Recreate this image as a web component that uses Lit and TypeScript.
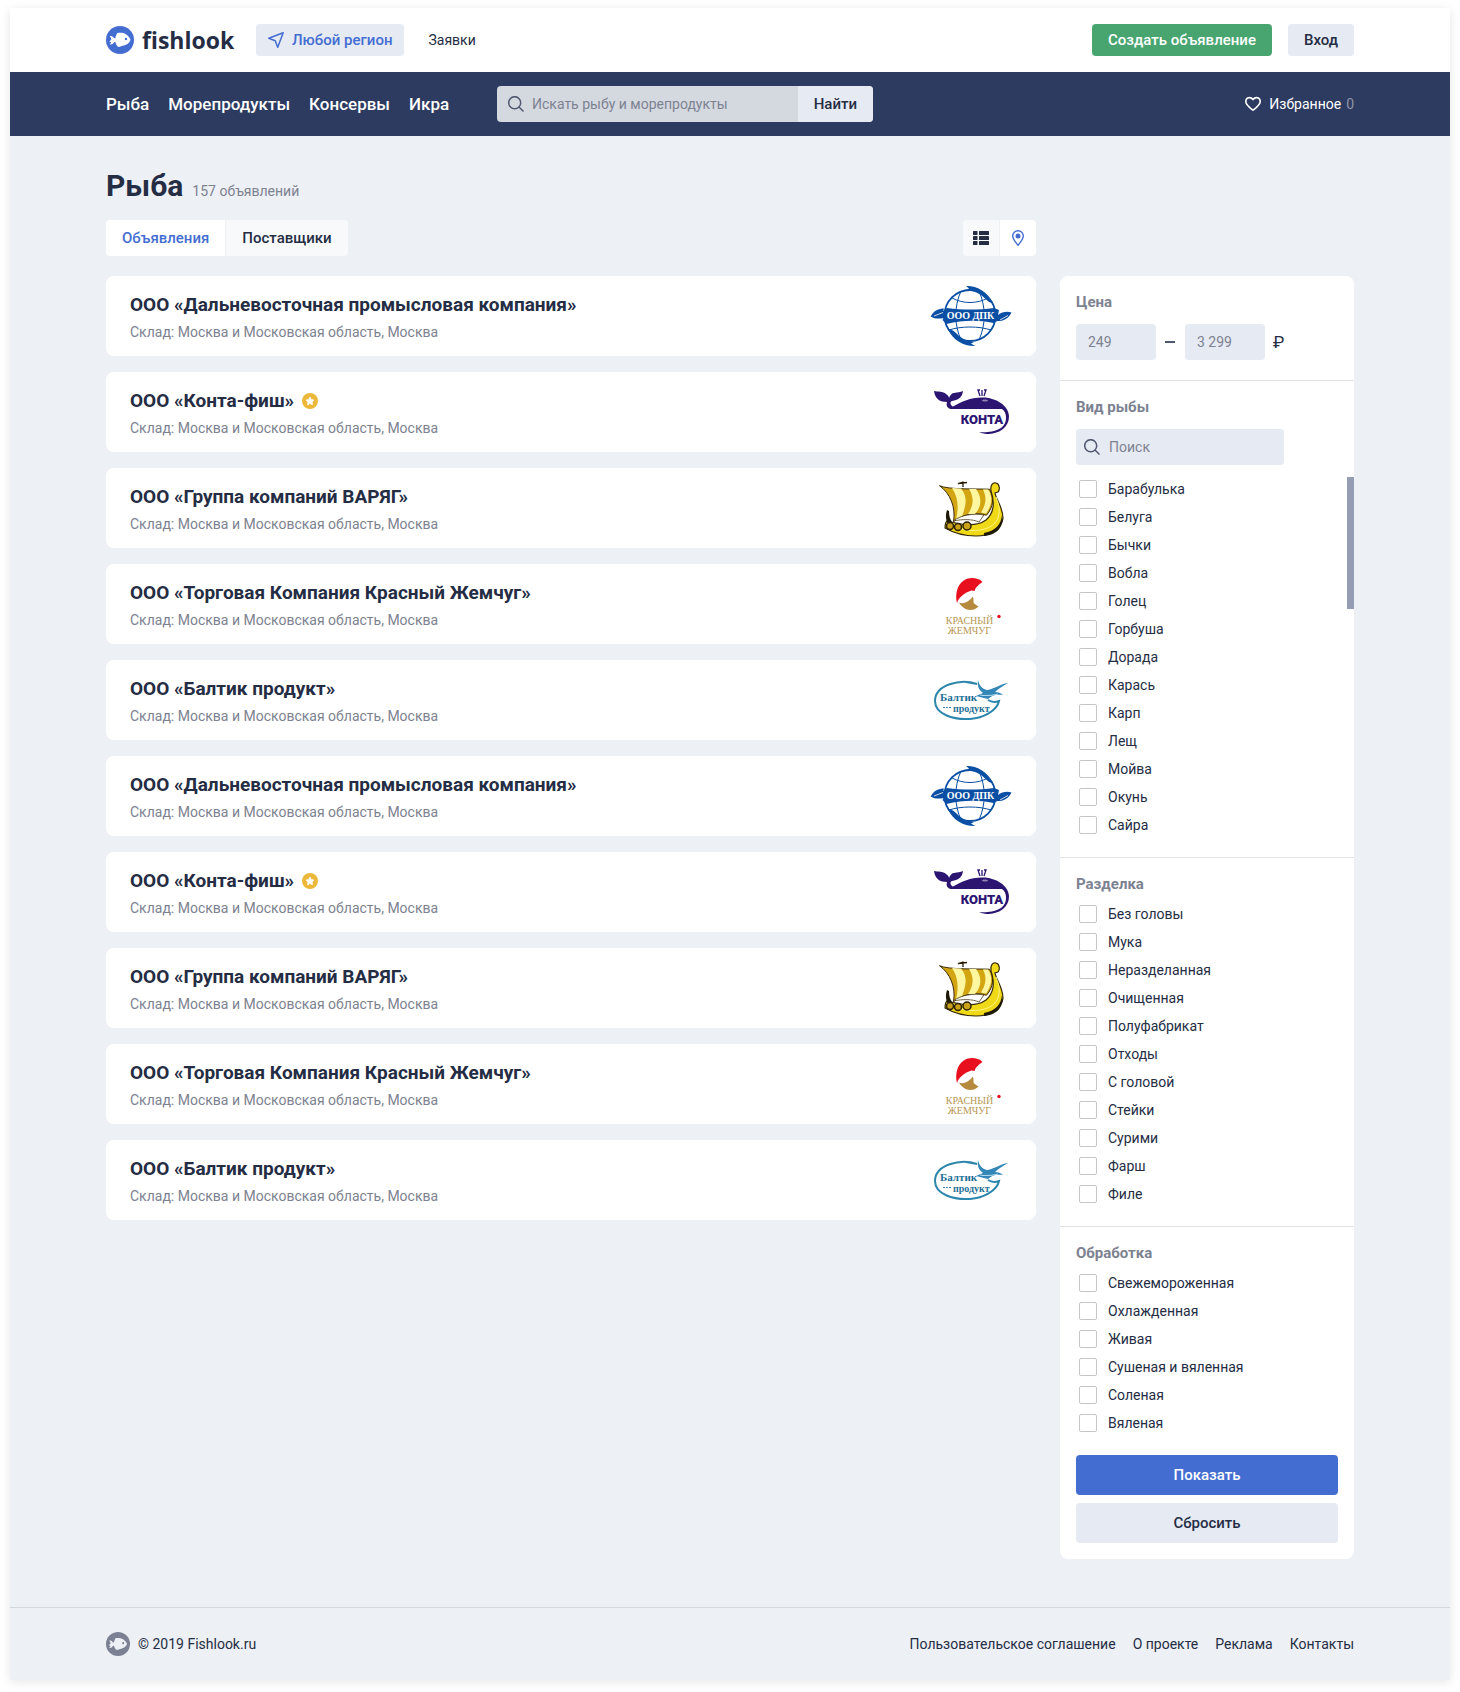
import { LitElement, html, svg, css, nothing } from "lit";
import { customElement, property } from "lit/decorators.js";
import { classMap } from "lit/directives/class-map.js";

type LogoName = "dpk" | "konta" | "varyag" | "zhemchug" | "baltik";

interface Company {
  name: string;
  logo: LogoName;
  starred?: boolean;
}

const companies: Company[] = [
  { name: "ООО «Дальневосточная промысловая компания»", logo: "dpk" },
  { name: "ООО «Конта-фиш»", logo: "konta", starred: true },
  { name: "ООО «Группа компаний ВАРЯГ»", logo: "varyag" },
  { name: "ООО «Торговая Компания Красный Жемчуг»", logo: "zhemchug" },
  { name: "ООО «Балтик продукт»", logo: "baltik" },
];

const fishKinds = ["Барабулька", "Белуга", "Бычки", "Вобла", "Голец", "Горбуша", "Дорада", "Карась", "Карп", "Лещ", "Мойва", "Окунь", "Сайра"];
const cuts = ["Без головы", "Мука", "Неразделанная", "Очищенная", "Полуфабрикат", "Отходы", "С головой", "Стейки", "Сурими", "Фарш", "Филе"];
const processing = ["Свежемороженная", "Охлажденная", "Живая", "Сушеная и вяленная", "Соленая", "Вяленая"];

const fishMark = html`<svg class="fish" viewBox="0 0 28 28" aria-hidden="true">
  <circle cx="14" cy="14" r="14" fill="currentColor" />
  <path class="fish-body" d="M3.6 10.2c1.6-.6 3.2.1 4.4 1.9l1.2.3c.5-2 1.3-4.2 2.1-5.3 5.6-.9 10 .6 13.2 6.3-.7 3.8-4.2 5.7-8 6.3l-3.6 1.2c-1.8-.3-2.900-2.500-3.600-5l-1.300.4c-1.100 2-2.700 2.600-4.400 2 1.600-.8 1.700-1.500 1.100-2.200l-1.500-.7c.9-.8 1.700-.9 2-1.900.2-1.200-.4-2.400-1.600-3.300z" />
  <circle cx="20" cy="13" r="1.2" fill="currentColor" />
</svg>`;

const searchIcon = html`<svg class="search-icon" viewBox="0 0 16 16" aria-hidden="true">
  <circle cx="6.7" cy="6.7" r="6" /><path d="M11 11l4.5 4.5" />
</svg>`;

const logos: Record<LogoName, unknown> = {
  dpk: svg`
    <g fill="none" stroke="#0a4fa3">
      <circle cx="40" cy="29.5" r="25.5" stroke-width="1.8" />
      <path d="M31 5c-7 16-7 33 0 49M49 5c7 16 7 33 0 49M22 12c11 6 25 6 36 0M19 44c12-4 30-4 42 0" />
    </g>
    <path fill="#0a4fa3" d="M36 0c10-.5 21 5 27 17-3-.2-5-1.5-7-3.5C50 7 43 4.5 36 4l3-1.5zM45 60c-10 .5-22-5-27-17 4 .5 6 2 9 5 5 5 10 7 17 8l-3 1.5z" />
    <path fill="#0a4fa3" d="M.7 30.5c3-6 8-8 13.3-8l-1 2.5 4-3c16 2 31 2 47 0l5 2-1 5c4-3 9-4 13.500-2.500-3 6-8 9-14 8.500l-4 2c-15-3-30-3-47 1l-4-4 1-2c-4 1-9 1-12.800-1.500z" />
    <path fill="none" stroke="#fff" stroke-width=".8" d="M4 30l9-3.5M70 34l8-4.5" />
    <text x="40.5" y="33" text-anchor="middle" fill="#fff" font-family="Liberation Serif, serif" font-weight="700" font-size="10">ООО ДПК</text>`,
  konta: svg`
    <path fill="#2b1571" d="M4 9c4 1 9 0 12 3 2 1 3 3 3 4 1-3 3-5 5-5 4-.5 6-1 9-2-1 7-5 9-11 10-3 1-1 5 1 5.500 9-5 17-9 29-9 14 0 27 8 27 19 0 11-10 17-20 17.500-4 0-7-.5-10-2 13 1 27-2 27-14 0-4-1-7-4-9H21c-4-.5-5-4-4-7C10 20 5 17 4 9z" />
    <path stroke="#2b1571" stroke-width="1.3" fill="none" d="M52 14V8M50 14l-2-6h2M54 14l2-6h-2" />
    <ellipse cx="55" cy="18.5" rx="3" ry="1" fill="#9187b8" />
    <text x="52" y="42" text-anchor="middle" fill="#2b1571" font-family="Roboto, sans-serif" font-weight="900" font-size="13">КОНТА</text>`,
  varyag: svg`
    <path fill="#d2a511" stroke="#3b2c08" d="M9.5 7.7c9 4 34 3 50 3.500 5 8 4 18-3 26-10-3-22-2-33 6.500C26 29 20 15 9.500 7.700z" />
    <path fill="#fff7a0" d="M22 10l9 .5c7 8 5 17 1 28l-6 3c3-13 2-22-4-31.500zM39 11h7c6 8 6 17-1 25h-7c6-9 6-17 1-25zM53 11.500h5c5 7 4 16-2 24l-5-1c5-8 6-15 2-23z" />
    <path fill="none" stroke="#2b2108" stroke-width="1.3" d="M33 9V4l-5 1.500 9-1" />
    <path fill="#f0d916" stroke="#352806" stroke-width="1.2" d="M61 13c-1-6 2-9 5-8 4 1 4 7 2 9l-3 1c1 6 8 15 8 25-1 12-14 18-27 18-12 0-24-4-31-8 0-3 0-5 2-7 12 3 28 7 39-1 8-7 9-17 5-29z" />
    <path fill="none" stroke="#fff48a" d="M66 19c4 10 5 18-1 26-8 8-21 9-34 6" />
    <path fill="#1f1907" d="M17 32l2 1c0 5 1 8 3 11l-3 4c-3-5-4-10-2-16zM54 55c11-2 17-8 18-18 2 12-5 20-18 21z" />
    <path d="M23 43c8-6 21-8 31-6l-5 7c-7-3-16-3-26-1z" fill="#fff" stroke="#4b3b10" stroke-width=".8" />
    <g fill="#c9a21a" stroke="#2b2108" stroke-width="1.5"><circle cx="20" cy="48" r="3.5" /><circle cx="28" cy="49" r="3.5" /><circle cx="37" cy="48" r="4" /></g>`,
  zhemchug: svg`
    <path fill="#e8101e" d="M27 29C24 15 31 4 42 4c4 0 8 1 10.500 4-4 3-7 5-8 9l-3-.5c-7 2-13 7-14.500 12.500z" />
    <path fill="#b58a3c" d="M29 28.500c4 2 9 0 14-6 1 4 0 6 1 7l4.500 3c-6 6-15 4-19.500-4z" />
    <circle cx="69" cy="42.5" r="1.7" fill="#e8101e" />
    <g fill="#b89653" font-family="Liberation Serif, serif" font-size="10" text-anchor="middle"><text x="39.5" y="50">КРАСНЫЙ</text><text x="39.5" y="60">ЖЕМЧУГ</text></g>`,
  baltik: svg`
    <path fill="none" stroke="#2c86ad" stroke-width="2" d="M47 14C30 8 5 15 5 31c0 13 18 19 35 18 13-1 27-8 29-18-5 2-8 1-11-1M36 12l11 2" />
    <path fill="#3287b8" d="M48 10c1 5 4 9 9 10 5 0 13-6 21-7-5 3-10 6-13 9 3 0 6 1 8 3-7-1-11 0-15 4l-12-3 7-3c-4-3-6-7-5-13z" />
    <path fill="none" stroke="#b5dced" stroke-width="1.2" d="M50 25c6 1 10 1 18-1" />
    <g fill="#1f6f96" font-family="Liberation Serif, serif" font-weight="700"><text x="10" y="31" font-size="11">Балтик</text><text x="23" y="42" font-size="10">продукт</text></g>
    <path stroke="#2c86ad" stroke-dasharray="2 1" d="M13 37.500h9" />`,
};

@customElement("company-card")
class CompanyCard extends LitElement {
  @property({ attribute: false }) company!: Company;

  static styles = css`
    :host { display: block; }
    .card { display: flex; justify-content: space-between; align-items: center; min-height: 80px; padding: 0 24px; box-sizing: border-box; background: #fff; border-radius: 8px; }
    .name { display: flex; align-items: center; gap: 8px; margin: 0; padding-top: 6px; font-size: 19px; line-height: 26px; font-weight: 700; color: #252d44; }
    .place { margin: 0; font-size: 14px; line-height: 28px; color: #7d8291; }
    .link { color: inherit; text-decoration: none; }
    .star { width: 16px; height: 16px; flex: none; }
    .logo { width: 82px; height: 60px; flex: none; overflow: visible; }
  `;

  render() {
    const { name, logo, starred } = this.company;
    return html`<article class="card">
      <div>
        <h2 class="name"><a class="link" href="#">${name}</a>${starred
          ? html`<svg class="star" viewBox="0 0 16 16" aria-hidden="true"><circle cx="8" cy="8" r="8" fill="#ecb83a" /><path fill="#fff" stroke="#fff" stroke-linejoin="round" d="M8 4.200l1.200 2.500 2.700.4-2 1.900.5 2.700L8 10.400l-2.400 1.300.5-2.700-2-1.900 2.700-.4z" /></svg>`
          : nothing}</h2>
        <p class="place">Склад: Москва и Московская область, Москва</p>
      </div>
      <svg class="logo" viewBox="0 0 82 60" aria-hidden="true">${logos[logo]}</svg>
    </article>`;
  }
}

@customElement("app-root")
class AppRoot extends LitElement {
  static styles = css`
    :host { display: block; padding: 8px 10px 12px; background: #fff; font-family: Roboto, "Liberation Sans", sans-serif; font-size: 14px; line-height: 20px; color: #252d44; }
    * { box-sizing: border-box; }
    a { color: inherit; text-decoration: none; }
    button, input { font: inherit; color: #252d44; border: 0; margin: 0; }
    button { cursor: pointer; padding: 0 16px; font-size: 15px; font-weight: 500; background: #e6eaf3; border-radius: 4px; }
    svg { flex: none; display: block; }
    .frame { background: #edf0f5; box-shadow: 0 2px 10px rgba(0, 0, 0, 0.1); }
    .wrap { display: flex; align-items: center; max-width: 1248px; margin: 0 auto; }
    .top { background: #fff; }
    .top .wrap, .nav .wrap { min-height: 64px; }
    .nav { background: #2c3b5f; color: #fff; }
    .fish { width: 28px; height: 28px; }
    .fish-body { fill: #fff; }
    .brand { display: flex; align-items: center; gap: 8px; width: 150px; color: #446dd1; }
    .brand-name { font: 700 23px/32px "Open Sans", sans-serif; color: #252d44; }
    .region { display: flex; align-items: center; gap: 8px; height: 32px; padding: 0 12px; color: #446dd1; }
    .region svg { width: 16px; height: 16px; fill: none; stroke: currentColor; stroke-width: 1.5; stroke-linejoin: round; }
    .requests { margin-left: 24px; }
    .actions { display: flex; gap: 16px; margin-left: auto; }
    .actions button { height: 32px; }
    .actions .create { background: #48a56f; color: #fff; }
    .sections { display: flex; gap: 19px; width: 391px; font-size: 17px; font-weight: 500; }
    .search { display: flex; align-items: center; width: 376px; height: 36px; border-radius: 4px; overflow: hidden; background: #d4d9e0; }
    .search-icon { width: 16px; height: 16px; fill: none; stroke: #505870; stroke-width: 1.5; }
    .search .search-icon { margin-left: 11px; }
    .search input { flex: 1; min-width: 0; height: 100%; padding: 0 8px; background: none; }
    .search button { height: 36px; border-radius: 0; }
    input::placeholder { color: #7d8291; opacity: 1; }
    .favourites { display: flex; gap: 8px; align-items: center; margin-left: auto; }
    .favourites svg { width: 16px; height: 16px; fill: none; stroke: #fff; stroke-width: 1.6; stroke-linejoin: round; }
    .count { margin-left: -3px; color: #8d95aa; }
    .main { display: grid; grid-template-columns: minmax(0, 1fr) 294px; column-gap: 24px; max-width: 1248px; margin: 0 auto; padding: 32px 0 48px; align-items: start; }
    .heading { grid-column: 1 / -1; display: flex; align-items: baseline; gap: 9px; margin-bottom: 16px; color: #7d8291; }
    .title { margin: 0; font-size: 30px; line-height: 36px; font-weight: 700; color: #252d44; }
    .toolbar { display: flex; justify-content: space-between; margin-bottom: 20px; }
    .tabs { display: flex; gap: 1px; border-radius: 4px; overflow: hidden; }
    .tabs button { height: 36px; border-radius: 0; background: #f8f9fb; }
    .tabs .active { background: #fff; color: #446dd1; }
    .views button { width: 36px; padding: 10px; }
    .views svg { width: 16px; height: 16px; }
    .list { grid-row: 3; display: grid; gap: 16px; }
    .filters { grid-row: 3; grid-column: 2; background: #fff; border-radius: 8px; }
    .group { margin: 0; padding: 16px 16px 20px; border: 0; min-width: 0; }
    .group + .group { border-top: 1px solid #e2e3e6; }
    .group-title { margin: 0 0 8px; font-size: 15px; line-height: 20px; font-weight: 700; color: #7d8291; }
    .spaced { margin-bottom: 12px; }
    .price { display: flex; align-items: center; font-size: 17px; }
    .price input { width: 80px; height: 36px; padding: 0 12px; border-radius: 4px; background: #e6eaf3; font-size: 14px; }
    .dash { width: 10px; height: 2px; margin: 0 10px 0 9px; background: #505870; }
    .rouble { margin-left: 8px; }
    .kind-search { display: flex; align-items: center; width: 208px; height: 36px; margin-bottom: 12px; padding-left: 8px; border-radius: 4px; background: #e6eaf3; }
    .kind-search input { flex: 1; min-width: 0; height: 100%; padding: 0 9px; background: none; }
    .options { position: relative; display: grid; gap: 4px; margin: 0; padding: 0 0 0 3px; list-style: none; }
    .option { display: flex; align-items: center; gap: 11px; height: 24px; }
    .box { appearance: none; width: 18px; height: 18px; flex: none; border: 1px solid #c6c6c6; border-radius: 2px; background: #fff; }
    .box:checked { background: #446dd1; }
    .thumb { position: absolute; top: 0; right: -16px; width: 7px; height: 132px; background: #949db2; }
    .submit { display: grid; gap: 8px; padding: 0 16px 16px; }
    .submit button { height: 40px; }
    .submit .show { background: #446dd1; color: #fff; }
    .footer { border-top: 1px solid #d3d7de; }
    .footer .wrap { min-height: 72px; gap: 8px; }
    .footer .fish { width: 24px; height: 24px; color: #7b8092; }
    .footer .fish-body { fill: #edf0f5; }
    .links { display: flex; gap: 17px; margin-left: auto; }
  `;

  private options(items: string[], scrolls = false) {
    return html`<ul class="options">
      ${items.map((item) => html`<li><label class="option"><input class="box" type="checkbox" />${item}</label></li>`)}
      ${scrolls ? html`<li class="thumb" aria-hidden="true"></li>` : nothing}
    </ul>`;
  }

  private group(title: string, content: unknown, spaced = false) {
    return html`<section class="group" aria-label=${title}>
      <h3 class=${classMap({ "group-title": true, spaced })}>${title}</h3>${content}
    </section>`;
  }

  render() {
    return html`<div class="frame">
      <header>
        <div class="top"><div class="wrap">
          <a class="brand" href="#">${fishMark}<span class="brand-name">fishlook</span></a>
          <button class="region"><svg viewBox="0 0 16 16" aria-hidden="true"><path d="M15.2.8L9.7 15.200 7.200 8.800.8 6.300z" /></svg>Любой регион</button>
          <a class="requests" href="#">Заявки</a>
          <div class="actions"><button class="create">Создать объявление</button><button>Вход</button></div>
        </div></div>
        <div class="nav"><div class="wrap">
          <nav class="sections"><a href="#">Рыба</a><a href="#">Морепродукты</a><a href="#">Консервы</a><a href="#">Икра</a></nav>
          <form class="search" @submit=${(e: Event) => e.preventDefault()}>
            ${searchIcon}<input type="text" aria-label="Искать рыбу и морепродукты" placeholder="Искать рыбу и морепродукты" /><button>Найти</button>
          </form>
          <a class="favourites" href="#"><svg viewBox="0 0 16 16" aria-hidden="true"><path d="M8 14.200C5.500 12.200.8 8.900.8 5.400.8 1.400 5.600.4 8 3.600c2.400-3.200 7.200-2.200 7.200 1.800 0 3.500-4.700 6.800-7.200 8.800z" /></svg>Избранное <span class="count">0</span></a>
        </div></div>
      </header>
      <main class="main">
        <div class="heading"><h1 class="title">Рыба</h1><span>157 объявлений</span></div>
        <div class="toolbar">
          <div class="tabs"><button class="active">Объявления</button><button>Поставщики</button></div>
          <div class="tabs views">
            <button aria-label="Список"><svg viewBox="0 0 16 16" fill="#252d44"><rect y="1" width="4.5" height="4" rx=".6" /><rect x="6" y="1" width="10" height="4" rx=".6" /><rect y="6" width="4.5" height="4" rx=".6" /><rect x="6" y="6" width="10" height="4" rx=".6" /><rect y="11" width="4.5" height="4" rx=".6" /><rect x="6" y="11" width="10" height="4" rx=".6" /></svg></button>
            <button class="active" aria-label="Карта"><svg viewBox="0 0 16 16"><path d="M8 15.300C5.500 12 2.700 9.100 2.700 6a5.300 5.300 0 0 1 10.600 0c0 3.100-2.800 6-5.300 9.300z" fill="none" stroke="currentColor" stroke-width="1.4" /><circle cx="8" cy="6" r="2.5" fill="currentColor" /></svg></button>
          </div>
        </div>
        <div class="list">${[...companies, ...companies].map((company) => html`<company-card .company=${company}></company-card>`)}</div>
        <aside class="filters">
          ${this.group("Цена", html`<div class="price"><input type="text" aria-label="Цена от" placeholder="249" /><span class="dash"></span><input type="text" aria-label="Цена до" placeholder="3 299" /><span class="rouble">₽</span></div>`, true)}
          ${this.group("Вид рыбы", html`<div class="kind-search">${searchIcon}<input type="text" aria-label="Поиск" placeholder="Поиск" /></div>${this.options(fishKinds, true)}`, true)}
          ${this.group("Разделка", this.options(cuts))}
          ${this.group("Обработка", this.options(processing))}
          <div class="submit"><button class="show">Показать</button><button>Сбросить</button></div>
        </aside>
      </main>
      <footer class="footer"><div class="wrap">
        ${fishMark}<span>© 2019 Fishlook.ru</span>
        <nav class="links"><a href="#">Пользовательское соглашение</a><a href="#">О проекте</a><a href="#">Реклама</a><a href="#">Контакты</a></nav>
      </div></footer>
    </div>`;
  }
}
